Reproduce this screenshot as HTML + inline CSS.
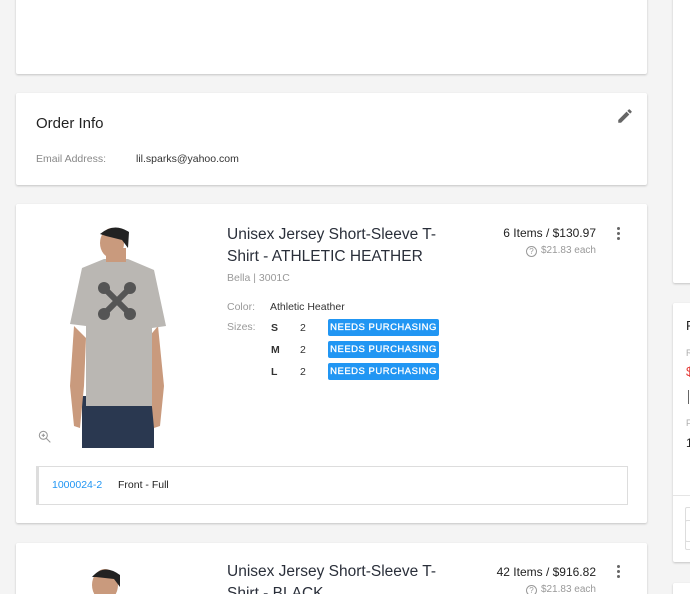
<!DOCTYPE html>
<html><head><style>
html,body{margin:0;width:690px;height:594px;overflow:hidden}
body{background:#f4f4f4;font-family:"Liberation Sans",sans-serif;position:relative;color:#333}
.card{position:absolute;background:#fff;box-shadow:0 1px 2px rgba(0,0,0,.2);border-radius:2px}
.a{position:absolute;white-space:nowrap}
.badge{position:absolute;left:328px;width:111px;height:17px;background:#2196f3;color:#fff;font-size:9.5px;letter-spacing:.5px;line-height:17px;text-align:center;border-radius:2px;-webkit-text-stroke:.3px #fff}
.dots{position:absolute;width:3px}
.dots i{display:block;width:3px;height:3px;border-radius:50%;background:#666;margin-bottom:2px}
</style></head><body>
<div class="card" style="left:16px;top:-10px;width:631px;height:84px"></div>
<div class="a" style="left:36px;top:-8px;font-size:10px;color:#bbb">Add notes here...</div>
<div class="card" style="left:673px;top:-10px;width:40px;height:293px"></div>

<div class="card" style="left:16px;top:93px;width:631px;height:92px"></div>
<div class="a" style="left:36px;top:115px;font-size:15px;color:#222">Order Info</div>
<svg class="a" style="left:616px;top:107px" width="18" height="18" viewBox="0 0 24 24"><path fill="#666" d="M3 17.25V21h3.75L17.81 9.94l-3.75-3.75L3 17.25zM20.71 7.04a1 1 0 000-1.41l-2.34-2.34a1 1 0 00-1.41 0l-1.83 1.83 3.75 3.75 1.83-1.83z"/></svg>
<div class="a" style="left:36px;top:153px;font-size:10.5px;color:#888">Email Address:</div>
<div class="a" style="left:136px;top:153px;font-size:10.5px;color:#333">lil.sparks@yahoo.com</div>

<div class="card" style="left:16px;top:204px;width:631px;height:319px"></div>
<svg class="a" style="left:66px;top:226px" width="105" height="222" viewBox="0 0 105 222">
<rect x="16" y="170" width="72" height="52" fill="#2a3850"/>
<path d="M8 100 L4 160 L8 200 L14 202 L18 160 L20 112Z" fill="#c99a7d"/>
<path d="M92 100 L98 160 L94 200 L88 202 L84 160 L82 112Z" fill="#c99a7d"/>
<path d="M16 42 L38 33 L62 33 L88 44 L100 100 L86 102 L86 180 L20 180 L20 100 L4 98Z" fill="#bab7b3"/>
<rect x="40" y="22" width="20" height="14" fill="#c99a7d"/>
<ellipse cx="46" cy="17" rx="12" ry="15" fill="#c99a7d"/>
<path d="M34 8 Q48 -4 63 6 L62 22 L56 14 L40 10Z" fill="#222"/>
<path d="M38 62 L64 88 M64 62 L38 88" stroke="#555" stroke-width="6" stroke-linecap="round"/>
<circle cx="38" cy="62" r="6" fill="#555"/><circle cx="64" cy="62" r="6" fill="#555"/><circle cx="38" cy="88" r="6" fill="#555"/><circle cx="64" cy="88" r="6" fill="#555"/>
</svg>
<svg class="a" style="left:37px;top:429px" width="16" height="16" viewBox="0 0 24 24"><circle cx="9.5" cy="9.5" r="6" fill="none" stroke="#999" stroke-width="1.6"/><path d="M14 14l6 6M9.5 7v5M7 9.5h5" stroke="#999" stroke-width="1.6"/></svg>
<div class="a" style="left:227px;top:224px;font-size:15.5px;line-height:22px;color:#2a2f3a;white-space:normal;width:230px">Unisex Jersey Short-Sleeve T-Shirt - ATHLETIC HEATHER</div>
<div class="a" style="left:227px;top:272px;font-size:10.5px;color:#999">Bella | 3001C</div>
<div class="a" style="left:227px;top:301px;font-size:10.5px;color:#999">Color:</div>
<div class="a" style="left:270px;top:301px;font-size:10.5px;color:#333">Athletic Heather</div>
<div class="a" style="left:227px;top:321px;font-size:10.5px;color:#999">Sizes:</div>
<div class="a" style="left:271px;top:322px;font-size:10.5px;font-weight:bold">S</div><div class="a" style="left:300px;top:322px;font-size:10.5px">2</div><div class="badge" style="top:319px">NEEDS PURCHASING</div>
<div class="a" style="left:271px;top:344px;font-size:10.5px;font-weight:bold">M</div><div class="a" style="left:300px;top:344px;font-size:10.5px">2</div><div class="badge" style="top:341px">NEEDS PURCHASING</div>
<div class="a" style="left:271px;top:366px;font-size:10.5px;font-weight:bold">L</div><div class="a" style="left:300px;top:366px;font-size:10.5px">2</div><div class="badge" style="top:363px">NEEDS PURCHASING</div>
<div class="a" style="right:94px;top:226px;font-size:12px;color:#222">6 Items / $130.97</div>
<div class="a" style="right:94px;top:245px;font-size:10px;color:#999"><span style="display:inline-block;width:9px;height:9px;border:1px solid #999;border-radius:50%;font-size:8px;line-height:9px;text-align:center;vertical-align:-1px;margin-right:4px">?</span>$21.83 each</div>
<div class="dots" style="left:617px;top:227px"><i></i><i></i><i></i></div>
<div class="a" style="left:36px;top:466px;width:588px;height:37px;border:1px solid #ddd;border-left:3px solid #ddd"></div>
<div class="a" style="left:52px;top:479px;font-size:10.5px;color:#2196f3">1000024-2</div>
<div class="a" style="left:118px;top:479px;font-size:10.5px;color:#222">Front - Full</div>

<div class="card" style="left:16px;top:543px;width:631px;height:80px"></div>
<svg class="a" style="left:84px;top:567px" width="40" height="30" viewBox="0 0 40 30"><ellipse cx="21" cy="18" rx="13" ry="16" fill="#c99a7d"/><path d="M8 10 Q20 -4 36 8 L36 20 L30 12 L12 10Z" fill="#222"/></svg>
<div class="a" style="left:227px;top:561px;font-size:15.5px;line-height:22px;color:#2a2f3a">Unisex Jersey Short-Sleeve T-</div>
<div class="a" style="left:227px;top:583px;font-size:15.5px;line-height:22px;color:#2a2f3a">Shirt - BLACK</div>
<div class="a" style="right:94px;top:565px;font-size:12px;color:#222">42 Items / $916.82</div>
<div class="a" style="right:94px;top:584px;font-size:10px;color:#999"><span style="display:inline-block;width:9px;height:9px;border:1px solid #999;border-radius:50%;font-size:8px;line-height:9px;text-align:center;vertical-align:-1px;margin-right:4px">?</span>$21.83 each</div>
<div class="dots" style="left:617px;top:565px"><i></i><i></i><i></i></div>

<div class="card" style="left:673px;top:303px;width:40px;height:259px"></div>
<div class="a" style="left:686px;top:318px;font-size:13px;color:#222">F</div>
<div class="a" style="left:686px;top:348px;font-size:9px;color:#aaa">R</div>
<div class="a" style="left:686px;top:364px;font-size:13px;color:#e53935">$</div>
<div class="a" style="left:688px;top:390px;width:1px;height:14px;background:#666"></div>
<div class="a" style="left:686px;top:418px;font-size:9px;color:#aaa">F</div>
<div class="a" style="left:686px;top:436px;font-size:12px;color:#222">1</div>
<div class="a" style="left:673px;top:495px;width:17px;height:1px;background:#e5e5e5"></div>
<div class="a" style="left:685px;top:507px;width:10px;height:33px;border:1px solid #ddd;border-radius:2px"></div>
<div class="a" style="left:685px;top:520px;width:10px;height:28px;border:1px solid #ddd;border-radius:2px"></div>
<div class="card" style="left:673px;top:583px;width:40px;height:30px"></div>
</body></html>
